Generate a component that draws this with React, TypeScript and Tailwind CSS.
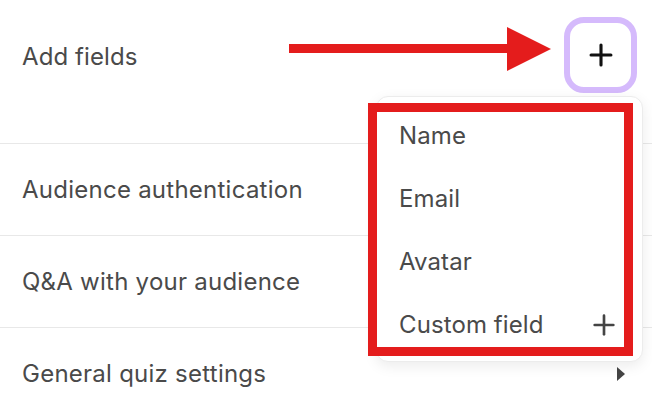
import { Plus } from "lucide-react";

const font = { fontFamily: "Inter, 'Noto Sans', sans-serif" };

function Row({ label, right }: { label: string; right?: React.ReactNode }) {
  return (
    <div className="flex h-[92px] shrink-0 items-center justify-between border-t border-[#e8e8e8] pl-[22px] pr-[27px]">
      <span className="text-[24px] tracking-[0.25px] text-[#4a4a4a]">{label}</span>
      {right}
    </div>
  );
}

export default function App() {
  const menuItems = ["Name", "Email", "Avatar"];
  return (
    <div className="relative h-[404px] w-[652px] overflow-hidden bg-white" style={font}>
      <div className="flex flex-col">
        <div className="flex h-[143px] shrink-0 items-start justify-between pl-[22px] pr-[15px] pt-[17px]">
          <div className="flex h-[76px] items-center pt-[3px]">
            <span className="text-[24px] tracking-[0.1px] text-[#4a4a4a]">Add fields</span>
          </div>
          <button className="flex h-[76px] w-[73px] items-center justify-center rounded-[20px] border-[6px] border-[#d5bafc] bg-white">
            <Plus size={34} strokeWidth={2.2} className="text-[#111]" />
          </button>
        </div>
        <Row label="Audience authentication" />
        <Row label="Q&A with your audience" />
        <Row
          label="General quiz settings"
          right={<span className="h-0 w-0 border-y-[7px] border-l-[8px] border-y-transparent border-l-[#444]" />}
        />
      </div>

      {/* annotation arrow */}
      <svg className="absolute left-[289px] top-[27px]" width="263" height="44" viewBox="0 0 263 44">
        <rect x="0" y="17" width="220" height="9" fill="#e41c1c" />
        <polygon points="218,0 262,22 218,44" fill="#e41c1c" />
      </svg>

      {/* dropdown menu */}
      <div className="absolute left-[376px] top-[96px] h-[266px] w-[267px] rounded-[12px] border border-[#ececec] bg-white pl-[22px] pr-[22px] pt-[7px] shadow-[0_4px_14px_rgba(0,0,0,0.08)]">
        {menuItems.map((item) => (
          <div key={item} className="flex h-[63px] items-center text-[24px] tracking-[0.1px] text-[#4a4a4a]">
            {item}
          </div>
        ))}
        <div className="flex h-[63px] items-center justify-between text-[24px] tracking-[0.1px] text-[#4a4a4a]">
          <span>Custom field</span>
          <Plus size={32} strokeWidth={2} className="text-[#444]" />
        </div>
      </div>

      {/* annotation box */}
      <div className="pointer-events-none absolute left-[368px] top-[103px] h-[253px] w-[265px] border-[9px] border-[#e41c1c]" />
    </div>
  );
}
